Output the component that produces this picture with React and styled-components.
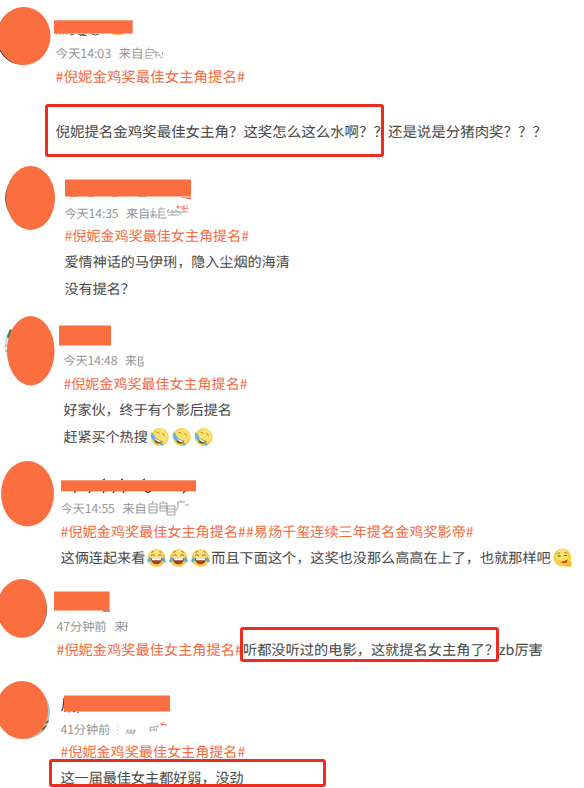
import React from "react";
import styled, { createGlobalStyle } from "styled-components";

const ORANGE = "#fb6e3f";

const GlobalStyle = createGlobalStyle`
  body { margin: 0; background: #fefefe; }
  * { box-sizing: border-box; }
`;

const Page = styled.main`
  width: 584px;
  height: 788px;
  overflow: hidden;
  position: relative;
  display: flex;
  flex-direction: column;
  background: #fefefe;
  font-family: "Noto Sans CJK SC", "Liberation Sans", sans-serif;
  text-rendering: geometricPrecision;
`;

const Post = styled.article`
  display: grid;
  grid-template-columns: ${(p) => p.$indent}px 1fr;
  flex: none;
  height: ${(p) => p.$height}px;
  font-size: ${(p) => p.$size}px;
`;

const AvatarCell = styled.div`
  padding-top: ${(p) => p.$top}px;
`;

const Avatar = styled.svg`
  display: block;
  overflow: visible;
  margin-left: ${(p) => p.$left}px;
`;

const Body = styled.div`
  display: flex;
  flex-direction: column;
  align-items: flex-start;
  padding-top: ${(p) => p.$top}px;
`;

const Name = styled.svg`
  display: block;
  flex: none;
  overflow: visible;
  margin-left: ${(p) => p.$shift || 0}px;
`;

const Line = styled.div`
  display: flex;
  align-items: center;
  flex: none;
  height: 20px;
  margin-top: ${(p) => p.$gap}px;
  margin-left: -0.5px;
  line-height: 20px;
  white-space: pre;
  color: #484848;
`;

const Meta = styled(Line)`
  font-size: 0.865em;
  letter-spacing: -0.1px;
  color: #969696;
`;

const Topic = styled.span`
  color: #f26c42;
`;

const Source = styled.span`
  margin-left: 7.5px;
`;

const Scraps = styled.svg`
  display: block;
  overflow: visible;
`;

const Emoji = styled.svg`
  display: block;
  flex: none;
  margin: 0 1px 0 2px;
`;

const Highlight = styled.div`
  position: absolute;
  left: ${(p) => p.$x}px;
  top: ${(p) => p.$y}px;
  width: ${(p) => p.$w}px;
  height: ${(p) => p.$h}px;
  border: 3px solid #eb2d20;
  border-radius: 3px;
`;

function Face({ w, h, children }) {
  return (
    <>
      {children}
      <ellipse cx={w / 2} cy={h / 2} rx={w / 2} ry={h / 2} fill={ORANGE} />
    </>
  );
}

function Rofl() {
  return (
    <Emoji width="19" height="20" viewBox="0 0 19 20">
      <circle cx="9.7" cy="10" r="9" fill="#f5cf4b" />
      <circle cx="11" cy="8.5" r="7" fill="#fbe071" />
      <path d="M6.5 5l3 1.500M12.500 6l2 3" stroke="#c08c35" strokeWidth="1" fill="none" />
      <path d="M3.500 8C5 11.500 8.500 13 12.500 14c-1.500 3-5.500 3.500-7.500 1.200C3.500 13.500 3 11 3.500 8z" fill="#80552c" />
      <path d="M4.500 10c1.500 2.500 4 3.600 7 4l-1.500 1c-2.500 0-5-1.500-5.500-5z" fill="#fff" />
      <path d="M1 5.500C3.500 6.500 5.800 9.500 5.500 14 2 13.500 0 10 1 5.500z" fill="#5fb4ea" />
      <path d="M9 16c2-.8 4 .2 5 2-1.800 1-4 .4-5-2z" fill="#68b5d8" />
    </Emoji>
  );
}

function Joy() {
  return (
    <Emoji width="19" height="20" viewBox="0 0 19 20">
      <circle cx="9.5" cy="10" r="8.9" fill="#f6cb4c" />
      <ellipse cx="9.5" cy="7" rx="6.8" ry="5.3" fill="#fce07a" />
      <path d="M3.8 7.7q2-2.300 4 0M11.200 7.700q2-2.300 4 0M4.300 4.300l2.300-.8M12.400 3.500l2.300.8" stroke="#a06a30" strokeWidth="1" fill="none" />
      <path d="M4 10.200h11c0 8-11 8-11 0z" fill="#9a4426" />
      <path d="M4.800 10.300h9.400l-.5 1.900H5.300z" fill="#fff" />
      <path d="M3.500 9C1 10 0 12 .4 14c2.300 1 4.400-1.200 3.100-5zM15.500 9c2.500 1 3.500 3 3.100 5-2.300 1-4.400-1.200-3.100-5z" fill="#53afd7" />
    </Emoji>
  );
}

function Thinking() {
  return (
    <Emoji width="19" height="20" viewBox="0 0 19 20">
      <circle cx="9.3" cy="9.5" r="8.9" fill="#f6d13c" />
      <circle cx="9" cy="7" r="6" fill="#fae36c" />
      <path d="M3.500 5.500l3.500-.7M11 4.500l3.500.5" stroke="#b58a35" strokeWidth="1" fill="none" />
      <path d="M4.800 7.800h2.700M11.300 7.500H14" stroke="#6b5230" strokeWidth="1.200" fill="none" />
      <path d="M7.500 14c2-.4 4.800-.3 6.800-2.700 1 3.700-2.800 5.500-6.800 2.700z" fill="#d83c20" />
      <path d="M11 17.500l4-2.300 1.500-3 2 1.400v5h-6.500z" fill="#f3b928" />
    </Emoji>
  );
}

const TOPIC = "#倪妮金鸡奖最佳女主角提名#";

export default function App() {
  return (
    <>
      <GlobalStyle />
      <Page>
        <Post $indent={56} $height={160} $size={14.46}>
          <AvatarCell $top={6.5}>
            <Avatar $left={-3} width="53.5" height="58">
              <Face w={53.5} h={58}>
                <ellipse cx="24.5" cy="30" rx="25" ry="27.5" fill="#2c2320" />
              </Face>
            </Avatar>
          </AvatarCell>
          <Body $top={20}>
            <Name $shift={-2} width="79" height="14">
              <path d="M3 13.500v1.200M6 13.500v1.200M9 13.500v1.200M13 13.500v1.200M16 14q2 2 4 0M24 14l3 1.200 4-1.200M26 15.200l7 .2M38 14q4 2 6 0M44 14v1.200" stroke="#555" strokeWidth="1" fill="none" />
              <path d="M58 12h11v2.200q-5.500 1.500-11 0z" fill="#ffb11c" />
              <rect y=".3" width="78.7" height="13.3" fill={ORANGE} />
            </Name>
            <Meta $gap={8.5}>
              今天14:03<Source>来自</Source>
              <Scraps width="24" height="14">
                <path d="M3 3.500v9M3 3.500h8M3 6.500h8M3 9.500h6M3 12.300h7M11 3.500v3M6 1.500l-1 2M11 6.500h5M12 9h4M13 5v7M16 8l2 4M19.500 6v3M19.500 11v1" stroke="#a5a5a5" fill="none" strokeWidth=".9" />
              </Scraps>
            </Meta>
            <Line $gap={4}><Topic>{TOPIC}</Topic></Line>
            <Line $gap={35}>倪妮提名金鸡奖最佳女主角？这奖怎么这么水啊？？还是说是分猪肉奖？？？</Line>
          </Body>
        </Post>

        <Post $indent={65} $height={150} $size={14.08}>
          <AvatarCell $top={5.5}>
            <Avatar $left={6} width="49" height="64">
              <Face w={49} h={64}>
                <ellipse cx="23" cy="32" rx="24" ry="26" fill="#566947" />
              </Face>
            </Avatar>
          </AvatarCell>
          <Body $top={19}>
            <Name $shift={-0.5} width="126" height="18">
              <rect y=".5" width="126" height="17" fill={ORANGE} />
              <path d="M5 17.700h7M23 17.700h5M47 17.700h5M74 17.700h8" stroke="#d9714c" strokeWidth=".6" />
              <path d="M114 18l12 .5v2z" fill={ORANGE} />
            </Name>
            <Meta $gap={5.5}>
              今天14:35<Source>来自</Source>
              <Scraps width="45" height="14">
                <path d="M0 6h6M0 9h8M3 2v10M3 8l-2 4M3 8l4 4M9 3v9M9 3h6M9 6h6M9 9h6M9 12h8M11 1v2M17 6h8M19 3l-2 3M18 9h11M22 4v5M23 6h15M25 4l4 2M30 6v3" stroke="#999" strokeWidth=".9" fill="none" />
                <path d="M26 1h8M28-1v4M34-1v7M31 3l8-1M36 0h2" stroke="#ee705a" strokeWidth=".9" fill="none" />
              </Scraps>
            </Meta>
            <Line $gap={3.5}><Topic>{TOPIC}</Topic></Line>
            <Line $gap={6}>爱情神话的马伊琍，隐入尘烟的海清</Line>
            <Line $gap={7}>没有提名？</Line>
          </Body>
        </Post>

        <Post $indent={64} $height={145} $size={14.04}>
          <AvatarCell $top={6}>
            <Avatar $left={7} width="47.5" height="69.5">
              <Face w={47.5} h={69.5}>
                <ellipse cx="21" cy="30" rx="23.500" ry="24" fill="#dbe2df" />
                <path d="M0 20l3-7 3 2-5 8z" fill="#278460" />
                <path d="M-2 30l4-2M-2 35h4" stroke="#9aa5a2" />
              </Face>
            </Avatar>
          </AvatarCell>
          <Body $top={15}>
            <Name $shift={-5.5} width="52" height="21">
              <rect y=".5" width="52" height="20" fill={ORANGE} />
            </Name>
            <Meta $gap={5}>
              今天14:48<Source>来</Source>
              <Scraps width="8" height="14">
                <path d="M1.500 3v9M1.500 3h5M1.500 6h4M1.500 9h5M1.500 12h5M5 3v3M6 7v5" stroke="#999" strokeWidth=".9" fill="none" />
              </Scraps>
            </Meta>
            <Line $gap={3}><Topic>{TOPIC}</Topic></Line>
            <Line $gap={6}>好家伙，终于有个影后提名</Line>
            <Line $gap={7}>赶紧买个热搜<Rofl /><Rofl /><Rofl /></Line>
          </Body>
        </Post>

        <Post $indent={61} $height={120} $size={14.15}>
          <AvatarCell $top={5.5}>
            <Avatar $left={0.5} width="53" height="65.5">
              <Face w={53} h={65.5} />
            </Avatar>
          </AvatarCell>
          <Body $top={25}>
            <Name $shift={-0.5} width="135" height="11">
              <path d="M14 10v3M30 10l-2 3M44 10l-2 3M54 10l-2 3M64 10l-2 3M84 11q3 2.500 6 0M125 10l-3 3M42 0l2-1M60 0l2-1M82 0l2-1" stroke="#333" strokeWidth="1.300" fill="none" />
              <rect y=".3" width="135" height="11" fill={ORANGE} />
            </Name>
            <Meta $gap={7}>
              今天14:55<Source>来自</Source>
              <Scraps width="44" height="14">
                <path d="M2 3v9h8V3zM2 6h8M2 9h8M6 0l-1 3M13 2v8h7V2zM13 5h7M13 7h7M16 0v2M20 5v9h8V5zM20 8h8M20 11h8M30 1h8M31 1v5l-2 4M34-1v2M38 4h4" stroke="#999" strokeWidth=".9" fill="none" />
              </Scraps>
            </Meta>
            <Line $gap={3.5}><Topic>{TOPIC}#易炀千玺连续三年提名金鸡奖影帝#</Topic></Line>
            <Line $gap={6.5}>这俩连起来看<Joy /><Joy /><Joy />而且下面这个，这奖也没那么高高在上了，也就那样吧<Thinking /></Line>
          </Body>
        </Post>

        <Post $indent={57} $height={100} $size={14.22}>
          <AvatarCell $top={4}>
            <Avatar $left={-3} width="49.8" height="58.7">
              <Face w={49.8} h={58.7}>
                <ellipse cx="25.500" cy="30.500" rx="24.600" ry="27.500" fill="#526170" />
              </Face>
            </Avatar>
          </AvatarCell>
          <Body $top={16}>
            <Name $shift={-3} width="56" height="20">
              <path d="M49 20h7" stroke="#777" strokeWidth="1.500" />
              <rect y=".5" width="55.5" height="19" fill={ORANGE} />
            </Name>
            <Meta $gap={5}>
              47分钟前<Source>来</Source>
              <Scraps width="4" height="14">
                <path d="M0 4h2M.5 4v8M-2 7h4" stroke="#999" strokeWidth=".9" fill="none" />
              </Scraps>
            </Meta>
            <Line $gap={3.5}><Topic>{TOPIC}</Topic>听都没听过的电影，这就提名女主角了？zb厉害</Line>
          </Body>
        </Post>

        <Post $indent={61} $height={113} $size={14.1}>
          <AvatarCell $top={6}>
            <Avatar $left={-4} width="52" height="58">
              <Face w={52} h={58}>
                <ellipse cx="28" cy="31" rx="26" ry="27" fill="#a5c8da" />
                <path d="M53 39q-3 15-22 19l-2-3 19-16z" fill="#c9b18c" />
                <path d="M52.500 40l-3 2M50 45l-4 4" stroke="#505653" strokeWidth="1.500" />
              </Face>
            </Avatar>
          </AvatarCell>
          <Body $top={20}>
            <Name $shift={2.5} width="106" height="17">
              <path d="M0 4l-1 9-1.500 3M-1 4h2M-1 8h2M1 14v3M5 16v1.500M9 16l2 1M14 17v1" stroke="#444" strokeWidth="1.300" fill="none" />
              <rect y=".5" width="106" height="16" fill={ORANGE} />
            </Name>
            <Meta $gap={6.5}>
              41分钟前
              <Scraps width="60" height="14">
                <path d="M7.500 4v1M7.500 8v1M7.500 12v1M16 9h10M18 7l-2 5M21 7v5M25 7l-2 6M17 11h8M39 6l10-2M41 4l-1 6M44 4v5M48 3l-2 6M39 8h8" stroke="#aaa" strokeWidth=".9" fill="none" />
                <path d="M50 2l7 1M53 0l-1 4" stroke="#ee705a" strokeWidth="1" />
              </Scraps>
            </Meta>
            <Line $gap={3.5}><Topic>{TOPIC}</Topic></Line>
            <Line $gap={6}>这一届最佳女主都好弱，没劲</Line>
          </Body>
        </Post>

        <Highlight $x={45} $y={104} $w={339} $h={53} />
        <Highlight $x={240} $y={627} $w={259} $h={35} />
        <Highlight $x={49} $y={759} $w={277} $h={28} />
      </Page>
    </>
  );
}
